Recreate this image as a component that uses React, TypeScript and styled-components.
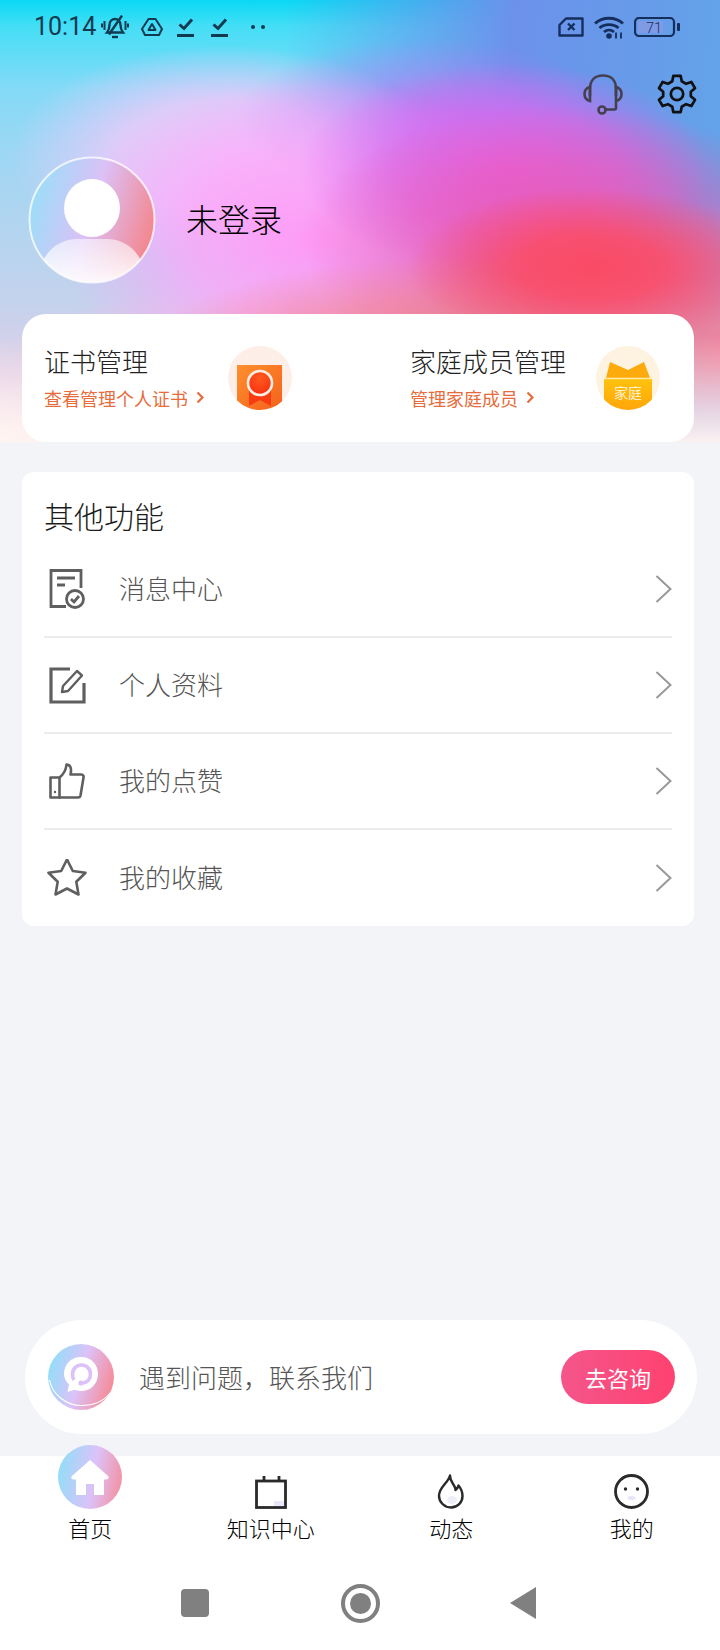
import React from "react";
import styled, { createGlobalStyle } from "styled-components";

const GlobalStyle = createGlobalStyle`
  html, body {
    margin: 0;
    padding: 0;
    background: #f2f4f8;
  }
  * {
    box-sizing: border-box;
  }
  #root {
    font-family: "Noto Sans CJK SC", "Noto Sans", sans-serif;
    font-weight: 300;
  }
`;

const Page = styled.div`
  width: 720px;
  height: 1650px;
  display: flex;
  flex-direction: column;
  background: #f2f4f8;
  overflow: hidden;
`;

const Hero = styled.header`
  height: 442px;
  display: flex;
  flex-direction: column;
  background-color: #fff;
  background-image:
    linear-gradient(to bottom, rgba(255, 240, 238, 0) 76%, rgba(255, 244, 242, 0.96) 100%),
    radial-gradient(ellipse 185px 80px at 592px 268px, rgba(250, 74, 100, 1) 0%, rgba(250, 78, 106, 0.9) 40%, rgba(248, 90, 130, 0) 100%),
    radial-gradient(ellipse 330px 90px at 480px 345px, rgba(248, 130, 132, 0.95) 0%, rgba(248, 130, 140, 0.6) 55%, rgba(248, 130, 140, 0) 100%),
    radial-gradient(ellipse 170px 150px at 730px 350px, rgba(248, 130, 160, 0.95) 0%, rgba(248, 130, 160, 0) 100%),
    radial-gradient(ellipse 260px 135px at 560px 240px, rgba(240, 85, 170, 0.95) 0%, rgba(238, 90, 180, 0.6) 55%, rgba(235, 100, 200, 0) 100%),
    radial-gradient(ellipse 205px 105px at 505px 168px, rgba(224, 100, 236, 1) 0%, rgba(218, 104, 238, 0.7) 55%, rgba(200, 120, 245, 0) 100%),
    radial-gradient(ellipse 250px 160px at 310px 240px, rgba(255, 155, 246, 1) 0%, rgba(255, 165, 250, 0.75) 50%, rgba(252, 180, 250, 0) 100%),
    radial-gradient(ellipse 190px 80px at 425px 118px, rgba(190, 120, 245, 0.8) 0%, rgba(180, 125, 245, 0) 100%),
    radial-gradient(ellipse 215px 110px at 225px 155px, rgba(236, 200, 250, 1) 0%, rgba(234, 202, 250, 0.85) 50%, rgba(230, 205, 250, 0) 100%),
    radial-gradient(ellipse 240px 110px at 210px 400px, rgba(248, 185, 205, 0.9) 0%, rgba(248, 190, 210, 0) 100%),
    linear-gradient(95deg, rgba(110, 150, 235, 0) 38%, rgba(108, 145, 235, 1) 68%, rgba(98, 165, 232, 1) 100%),
    linear-gradient(245deg, rgba(150, 120, 225, 1) 0%, rgba(150, 120, 225, 0) 22%),
    linear-gradient(to bottom, #0ad8f4 0%, #45def6 6%, #84daf7 20%, #a8d6f2 42%, #c4d2ec 68%, #e0cfe8 86%, #fbeef2 100%);
`;

const StatusBar = styled.div`
  height: 54px;
  flex-shrink: 0;
  display: flex;
  align-items: center;
  justify-content: space-between;
  padding: 0 39px 0 34px;
  color: #123a50;
`;

const StatusGroup = styled.div<{ $gap: number; $left?: number }>`
  display: flex;
  align-items: center;
  gap: ${(p) => p.$gap}px;
  margin-left: ${(p) => p.$left ?? 0}px;
`;

const Clock = styled.span`
  font-family: Roboto, "Liberation Sans", sans-serif;
  font-weight: 400;
  font-size: 25px;
  line-height: 30px;
  margin-right: 5px;
`;

const Actions = styled.div`
  margin-top: 20px;
  display: flex;
  justify-content: flex-end;
  gap: 34px;
  padding-right: 23px;
`;

const Profile = styled.div`
  margin-top: 41px;
  display: flex;
  align-items: center;
  gap: 30px;
  padding-left: 28px;
`;

const UserName = styled.div`
  font-size: 32px;
  line-height: 44px;
  color: #000;
  margin-top: -4px;
`;

const ShortcutCard = styled.section`
  margin: auto 26px 0 22px;
  height: 128px;
  display: flex;
  align-items: center;
  justify-content: space-between;
  padding: 0 34px 0 22px;
  background: #fff;
  border-radius: 24px;
`;

const Shortcut = styled.div<{ $width: number }>`
  width: ${(p) => p.$width}px;
  display: flex;
  align-items: center;
  justify-content: space-between;
`;

const ShortcutText = styled.div`
  padding-bottom: 3px;
`;

const ShortcutTitle = styled.div`
  font-size: 26px;
  line-height: 36px;
  color: #222;
`;

const ShortcutHint = styled.div`
  margin-top: 6px;
  display: flex;
  align-items: center;
  gap: 8px;
  font-size: 18px;
  line-height: 26px;
  font-weight: 400;
  color: #e66c3c;
`;

const MenuCard = styled.section`
  margin: 30px 26px 0 22px;
  padding: 22px 22px 0;
  background: #fff;
  border-radius: 12px;
`;

const MenuTitle = styled.h2`
  margin: 0 0 6px;
  font-size: 30px;
  line-height: 42px;
  font-weight: 300;
  color: #1c1c1c;
`;

const MenuRow = styled.div<{ $last?: boolean }>`
  height: 96px;
  display: flex;
  align-items: center;
  border-bottom: ${(p) => (p.$last ? "none" : "2px solid #ececee")};
`;

const MenuIcon = styled.div`
  width: 46px;
  display: flex;
  justify-content: center;
  margin-right: 29px;
`;

const MenuLabel = styled.span`
  flex: 1;
  padding-bottom: 2px;
  font-size: 26px;
  line-height: 36px;
  color: #555;
`;

const Filler = styled.div`
  flex: 1;
`;

const ContactBar = styled.section`
  margin: 0 23px 22px 25px;
  height: 114px;
  display: flex;
  align-items: center;
  padding: 0 22px 0 23px;
  background: #fff;
  border-radius: 57px;
`;

const ContactText = styled.span`
  flex: 1;
  margin-left: 25px;
  font-size: 26px;
  line-height: 36px;
  color: #555;
`;

const ConsultButton = styled.button`
  width: 114px;
  height: 54px;
  border: none;
  border-radius: 27px;
  padding: 0;
  font-family: inherit;
  font-weight: 400;
  font-size: 22px;
  color: #fff;
  background: linear-gradient(90deg, #f4558b 0%, #ff4270 100%);
`;

const TabBar = styled.nav`
  height: 102px;
  flex-shrink: 0;
  display: grid;
  grid-template-columns: repeat(4, 180.5px);
  background: #fff;
`;

const Tab = styled.div`
  display: flex;
  flex-direction: column;
  align-items: center;
`;

const TabIcon = styled.div`
  height: 59px;
  padding-bottom: 6px;
  display: flex;
  align-items: flex-end;
`;

const TabLabel = styled.span`
  font-size: 22px;
  line-height: 24px;
  color: #000;
`;

const HomeBadge = styled.div`
  width: 64px;
  height: 64px;
  display: flex;
  align-items: center;
  justify-content: center;
  border-radius: 50%;
  background: linear-gradient(100deg, #96dcf8 8%, #dcc2f8 55%, #f78a96 100%);
`;

const SystemBar = styled.div`
  height: 92px;
  flex-shrink: 0;
  display: flex;
  align-items: center;
  justify-content: center;
  padding: 0 3px 2px 0;
  background: #fff;
`;

const SystemSquare = styled.div`
  width: 28px;
  height: 28px;
  border-radius: 4px;
  background: #808080;
`;

const SystemCircle = styled.div`
  width: 39px;
  height: 39px;
  margin: 0 130px 0 132px;
  border-radius: 50%;
  border: 4px solid #808080;
  display: flex;
  align-items: center;
  justify-content: center;
  &::after {
    content: "";
    width: 21px;
    height: 21px;
    border-radius: 50%;
    background: #808080;
  }
`;

const SystemBack = styled.div`
  width: 0;
  height: 0;
  border-top: 16px solid transparent;
  border-bottom: 16px solid transparent;
  border-right: 26px solid #808080;
`;

const Chevron = ({ small }: { small?: boolean }) =>
  small ? (
    <svg width="8" height="13" viewBox="0 0 8 13" fill="none">
      <path d="M1.500 1.500 6.500 6.500 1.500 11.500" stroke="#e66c3c" strokeWidth="2.200" />
    </svg>
  ) : (
    <svg width="17" height="28" viewBox="0 0 17 28" fill="none">
      <path d="M1.500 1 15.500 14 1.500 27" stroke="#999" strokeWidth="2" />
    </svg>
  );

const BellOff = () => (
  <svg width="28" height="24" viewBox="0 0 28 24" fill="none" stroke="#123a50" strokeWidth="2.400">
    <path d="M6 17.500h16c-2-2.500-2.500-4.500-2.500-7.500 0-3.500-2.500-6-5.500-6S8.500 6.500 8.500 10c0 3-.5 5-2.500 7.500Z" />
    <path d="M11 22h6" />
    <path d="M21 .5 8 19.500" />
    <path d="M3.500 6v9M1 8.500v4M24.500 6v9M27 8.500v4" strokeWidth="2" />
  </svg>
);

const DriveMark = () => (
  <svg width="22" height="18" viewBox="0 0 22 18" fill="none" stroke="#123a50" strokeWidth="2" strokeLinejoin="round">
    <path d="M7.500 1h7L21 11l-3 6H4l-3-6Z" />
    <path d="M11 6l3.500 6h-7Z" />
  </svg>
);

const DoneMark = () => (
  <svg width="17" height="19" viewBox="0 0 17 19" fill="none" stroke="#123a50">
    <path d="M2.500 6.500 7 10.500 15 1.500" strokeWidth="3" />
    <path d="M0 17.500h17" strokeWidth="3" />
  </svg>
);

const Dots = () => (
  <svg width="14" height="4" viewBox="0 0 14 4" fill="#123a50">
    <circle cx="2" cy="2" r="2" />
    <circle cx="12" cy="2" r="2" />
  </svg>
);

const SimOff = () => (
  <svg width="26" height="20" viewBox="0 0 26 20" fill="none" stroke="#152f5c" strokeWidth="2.400" strokeLinejoin="round">
    <path d="M8 1.500h16.500v17H1.500V8Z" />
    <path d="M10 6.500 16.500 13M16.500 6.500 10 13" />
  </svg>
);

const Wifi = () => (
  <svg width="30" height="23" viewBox="0 0 30 23" fill="none" stroke="#152f5c" strokeWidth="2.800">
    <path d="M1 7.500C8.500.5 21.500.5 29 7.500" />
    <path d="M5.500 12C10.500 7.500 19.500 7.500 24.500 12" />
    <path d="M10 16c3-2.500 7-2.500 10 0" />
    <circle cx="15" cy="20" r="2.800" fill="#152f5c" stroke="none" />
    <path d="M22 16.500v6M27 16.500v6" strokeWidth="1.800" />
  </svg>
);

const Battery = () => (
  <svg width="47" height="20" viewBox="0 0 47 20" fill="none">
    <rect x="1" y="1" width="39" height="18" rx="4" stroke="#152f5c" strokeWidth="2.200" />
    <rect x="4" y="4" width="25" height="12" fill="#7f9be6" />
    <rect x="43" y="6" width="3" height="8" rx="1" fill="#152f5c" />
    <text x="20" y="15.500" textAnchor="middle" fontFamily="Roboto, sans-serif" fontSize="14.500" fill="#152f5c">
      71
    </text>
  </svg>
);

const Headset = () => (
  <svg width="40" height="41" viewBox="0 0 40 41" fill="none" stroke="#444050" strokeWidth="2.600">
    <path d="M7 22V15C7 6 12 1.500 20 1.500S33 6 33 15v7" />
    <path d="M7 13C3 14 1.500 16.500 1.500 20S3 26 7 27ZM33 13c4 1 5.500 3.500 5.500 7S37 26 33 27Z" />
    <path d="M33 28v6c0 1-.5 1.500-1.500 1.500H23" />
    <circle cx="19" cy="36" r="3.500" />
  </svg>
);

const Gear = () => (
  <svg width="40" height="40" viewBox="1 1 22 22" fill="none" stroke="#111" strokeWidth="1.500" strokeLinejoin="round">
    <path d="M10 2h4l.6 3 2.400 1.400 2.900-1 2 3.400-2.300 2 0 2.400 2.300 2-2 3.400-2.900-1L14.600 19l-.6 3h-4l-.6-3L7 17.600l-2.900 1-2-3.400 2.300-2v-2.400l-2.300-2 2-3.400 2.900 1L9.400 5Z" />
    <circle cx="12" cy="12" r="3.400" />
  </svg>
);

const AvatarArt = () => (
  <svg width="128" height="128" viewBox="0 0 128 128">
    <defs>
      <linearGradient id="avatarFill" x1="0" y1="0.300" x2="1" y2="0.600">
        <stop offset="0.050" stopColor="#9fdcf8" />
        <stop offset="0.500" stopColor="#dcc0f6" />
        <stop offset="1" stopColor="#f4858c" />
      </linearGradient>
      <linearGradient id="avatarBody" x1="0" y1="0" x2="0" y2="1">
        <stop offset="0" stopColor="#fff" stopOpacity="0.550" />
        <stop offset="1" stopColor="#fff" stopOpacity="0.950" />
      </linearGradient>
      <clipPath id="avatarClip">
        <circle cx="64" cy="64" r="62.500" />
      </clipPath>
    </defs>
    <circle cx="64" cy="64" r="62.500" fill="url(#avatarFill)" />
    <g clipPath="url(#avatarClip)">
      <path d="M15 105c6-14 20-22 34-22h30c14 0 28 8 34 22v25H15Z" fill="url(#avatarBody)" />
    </g>
    <ellipse cx="64" cy="52" rx="28" ry="29" fill="#fff" />
    <circle cx="64" cy="64" r="62.500" fill="none" stroke="#fff" strokeOpacity="0.750" strokeWidth="2" />
  </svg>
);

const CertBadge = () => (
  <svg width="64" height="64" viewBox="0 0 64 64">
    <defs>
      <linearGradient id="certFill" x1="0" y1="0" x2="1" y2="1">
        <stop offset="0" stopColor="#ff8f2e" />
        <stop offset="1" stopColor="#f4621c" />
      </linearGradient>
      <radialGradient id="certMedal" cx="0.500" cy="0.300" r="0.800">
        <stop offset="0" stopColor="#ff5a1e" />
        <stop offset="1" stopColor="#f62a10" />
      </radialGradient>
      <clipPath id="certClip">
        <circle cx="32" cy="32" r="32" />
      </clipPath>
    </defs>
    <circle cx="32" cy="32" r="32" fill="#fdeee8" />
    <g clipPath="url(#certClip)">
      <rect x="9" y="19" width="45" height="45" fill="url(#certFill)" />
      <path d="M21 42h22v18l-11-6-11 6Z" fill="#f63c10" />
      <circle cx="32" cy="37" r="12" fill="url(#certMedal)" stroke="#ffeee4" strokeWidth="2.600" />
    </g>
  </svg>
);

const FamilyBadge = () => (
  <svg width="64" height="64" viewBox="0 0 64 64">
    <defs>
      <linearGradient id="familyFill" x1="0" y1="0" x2="0" y2="1">
        <stop offset="0" stopColor="#ffc20c" />
        <stop offset="1" stopColor="#ffa40a" />
      </linearGradient>
      <clipPath id="familyClip">
        <circle cx="32" cy="32" r="32" />
      </clipPath>
    </defs>
    <circle cx="32" cy="32" r="32" fill="#fdf3e0" />
    <g clipPath="url(#familyClip)">
      <path d="M10 32 14 16 32 24 48 16 54 32Z" fill="#fdaa0c" />
      <path d="M8 33h48v32H8Z" fill="url(#familyFill)" />
      <path d="M8 32.500h48" stroke="#ffe9a8" strokeWidth="1.500" />
      <text x="32" y="52" textAnchor="middle" fontFamily="'Noto Sans CJK SC', sans-serif" fontWeight="400" fontSize="14" fill="#fff2d0">
        家庭
      </text>
    </g>
  </svg>
);

const MessageIcon = () => (
  <svg width="36" height="40" viewBox="0 0 36 40" fill="none" stroke="#5f5f5f" strokeWidth="2.800">
    <path d="M17 37.500H2V1.500h30V19" />
    <path d="M8 9h18M8 16h8" />
    <circle cx="26" cy="30" r="8.500" />
    <path d="M22 30l3 3 5-6" />
  </svg>
);

const EditIcon = () => (
  <svg width="37" height="37" viewBox="0 0 37 37" fill="none" stroke="#5f5f5f" strokeWidth="3.200">
    <path d="M21 2H2v33h33V16" />
    <path d="M13 25l1-6L28 4l5 4.500L19 24Z" strokeWidth="2.400" strokeLinejoin="round" />
  </svg>
);

const ThumbIcon = () => (
  <svg width="36" height="36" viewBox="0 0 36 36" fill="none" stroke="#5f5f5f" strokeWidth="2.600" strokeLinejoin="round">
    <path d="M1.500 14.500h9v20h-9Z" />
    <path d="M10.500 14.500C15 11 17 7 17.500 1.500c3.500 0 5.500 3.500 4 10h11c1.500 0 2.500 1.500 2 3l-3 18c-.3 1.500-1.200 2-2.500 2h-19" />
    <circle cx="6" cy="29" r="1.200" fill="#5f5f5f" stroke="none" />
  </svg>
);

const StarIcon = () => (
  <svg width="40" height="38" viewBox="0 1 40 38" fill="none" stroke="#5f5f5f" strokeWidth="2.600" strokeLinejoin="round">
    <path d="M20 1.500 25.800 13l12.700 1.700-9.200 9 2.200 12.800L20 30.500 8.500 36.500l2.200-12.800-9.200-9L14.200 13Z" />
  </svg>
);

const ContactArt = () => (
  <svg width="66" height="66" viewBox="0 0 66 66">
    <defs>
      <linearGradient id="contactFill" x1="0" y1="0.300" x2="1" y2="0.600">
        <stop offset="0.050" stopColor="#96dcf8" />
        <stop offset="0.500" stopColor="#dcc2f8" />
        <stop offset="1" stopColor="#f78a96" />
      </linearGradient>
    </defs>
    <circle cx="33" cy="33" r="33" fill="url(#contactFill)" />
    <path d="M1.500 36C4 50 18 61.500 33 61.500S56 57 62 49" fill="none" stroke="#fff" strokeWidth="1.200" />
    <path d="M33 13c10 0 17 7.500 17 17s-7 17-17 17c-2.500 0-4.500-.5-6.500-1.200L19.500 48l1.500-7.500c-3-3-5-6.500-5-10.500 0-9.500 7-17 17-17Z" fill="#fff" />
    <path d="M26 36c-1-1.500-1.500-3.500-1.500-6 0-5 4-9 9-9s9 4 9 9-3 8.500-8 9" fill="none" stroke="#dcc2f8" strokeWidth="3.600" />
    <circle cx="33" cy="39" r="2.600" fill="#dcc2f8" />
  </svg>
);

const HomeGlyph = () => (
  <svg width="38" height="35" viewBox="0 0 38 35">
    <path d="M19 0 37 16c1.500 1.500.5 3.500-1.500 3.500H33V35H23V24h-8v11H5V19.500H2.500C.5 19.500-.5 17.500 1 16Z" fill="#fff" />
  </svg>
);

const CalendarIcon = () => (
  <svg width="32" height="33" viewBox="0 0 32 33" fill="none">
    <rect x="1.500" y="5" width="29" height="26.500" stroke="#2a2a2a" strokeWidth="2.800" />
    <path d="M9 0v6M24 0v6" stroke="#2a2a2a" strokeWidth="2.800" />
    <rect x="19" y="25" width="10" height="5" fill="#e8e8fa" />
  </svg>
);

const FlameIcon = () => (
  <svg width="28" height="35" viewBox="0 0 28 35" fill="none">
    <path
      d="M13 1.500c0 5 2.500 7.500 4 10 1 1.500 1.500 3 1.500 4.500 1.500-1 2.500-2.500 3-4.500 2.500 3 4 6.500 4 10.500 0 6.500-5 11.500-11.500 11.500S2 28 2 22c0-4 2-7.500 5-11 2.500-3 5-5.500 6-9.500Z"
      stroke="#2a2a2a"
      strokeWidth="2.400"
      strokeLinejoin="round"
    />
    <ellipse cx="15" cy="26" rx="5" ry="4" fill="#eeeefb" />
  </svg>
);

const FaceIcon = () => (
  <svg width="35" height="35" viewBox="0 0 35 35" fill="none">
    <circle cx="17.500" cy="17.500" r="16" stroke="#2a2a2a" strokeWidth="2.800" />
    <circle cx="11.500" cy="15" r="1.700" fill="#2a2a2a" />
    <circle cx="23.500" cy="15" r="1.700" fill="#2a2a2a" />
    <ellipse cx="17.500" cy="24" rx="4" ry="2" fill="#e6e6fa" />
  </svg>
);

const menuItems = [
  { label: "消息中心", icon: <MessageIcon /> },
  { label: "个人资料", icon: <EditIcon /> },
  { label: "我的点赞", icon: <ThumbIcon /> },
  { label: "我的收藏", icon: <StarIcon /> },
];

const tabs = [
  { label: "首页", icon: <HomeBadge><HomeGlyph /></HomeBadge> },
  { label: "知识中心", icon: <CalendarIcon /> },
  { label: "动态", icon: <FlameIcon /> },
  { label: "我的", icon: <FaceIcon /> },
];

const App = () => {
  return (
    <Page>
      <GlobalStyle />
      <Hero>
        <StatusBar>
          <StatusGroup $gap={12}>
            <StatusGroup $gap={0}>
              <Clock>10:14</Clock>
              <BellOff />
            </StatusGroup>
            <DriveMark />
            <StatusGroup $gap={17} $left={2}>
              <DoneMark />
              <DoneMark />
            </StatusGroup>
            <StatusGroup $gap={0} $left={11}>
              <Dots />
            </StatusGroup>
          </StatusGroup>
          <StatusGroup $gap={10}>
            <SimOff />
            <Wifi />
            <Battery />
          </StatusGroup>
        </StatusBar>
        <Actions>
          <Headset />
          <Gear />
        </Actions>
        <Profile>
          <AvatarArt />
          <UserName>未登录</UserName>
        </Profile>
        <ShortcutCard>
          <Shortcut $width={248}>
            <ShortcutText>
              <ShortcutTitle>证书管理</ShortcutTitle>
              <ShortcutHint>
                查看管理个人证书
                <Chevron small />
              </ShortcutHint>
            </ShortcutText>
            <CertBadge />
          </Shortcut>
          <Shortcut $width={250}>
            <ShortcutText>
              <ShortcutTitle>家庭成员管理</ShortcutTitle>
              <ShortcutHint>
                管理家庭成员
                <Chevron small />
              </ShortcutHint>
            </ShortcutText>
            <FamilyBadge />
          </Shortcut>
        </ShortcutCard>
      </Hero>

      <MenuCard>
        <MenuTitle>其他功能</MenuTitle>
        {menuItems.map((item, i) => (
          <MenuRow key={item.label} $last={i === menuItems.length - 1}>
            <MenuIcon>{item.icon}</MenuIcon>
            <MenuLabel>{item.label}</MenuLabel>
            <Chevron />
          </MenuRow>
        ))}
      </MenuCard>

      <Filler />

      <ContactBar>
        <ContactArt />
        <ContactText>遇到问题，联系我们</ContactText>
        <ConsultButton>去咨询</ConsultButton>
      </ContactBar>

      <TabBar>
        {tabs.map((tab) => (
          <Tab key={tab.label}>
            <TabIcon>{tab.icon}</TabIcon>
            <TabLabel>{tab.label}</TabLabel>
          </Tab>
        ))}
      </TabBar>

      <SystemBar>
        <SystemSquare />
        <SystemCircle />
        <SystemBack />
      </SystemBar>
    </Page>
  );
};

export default App;
